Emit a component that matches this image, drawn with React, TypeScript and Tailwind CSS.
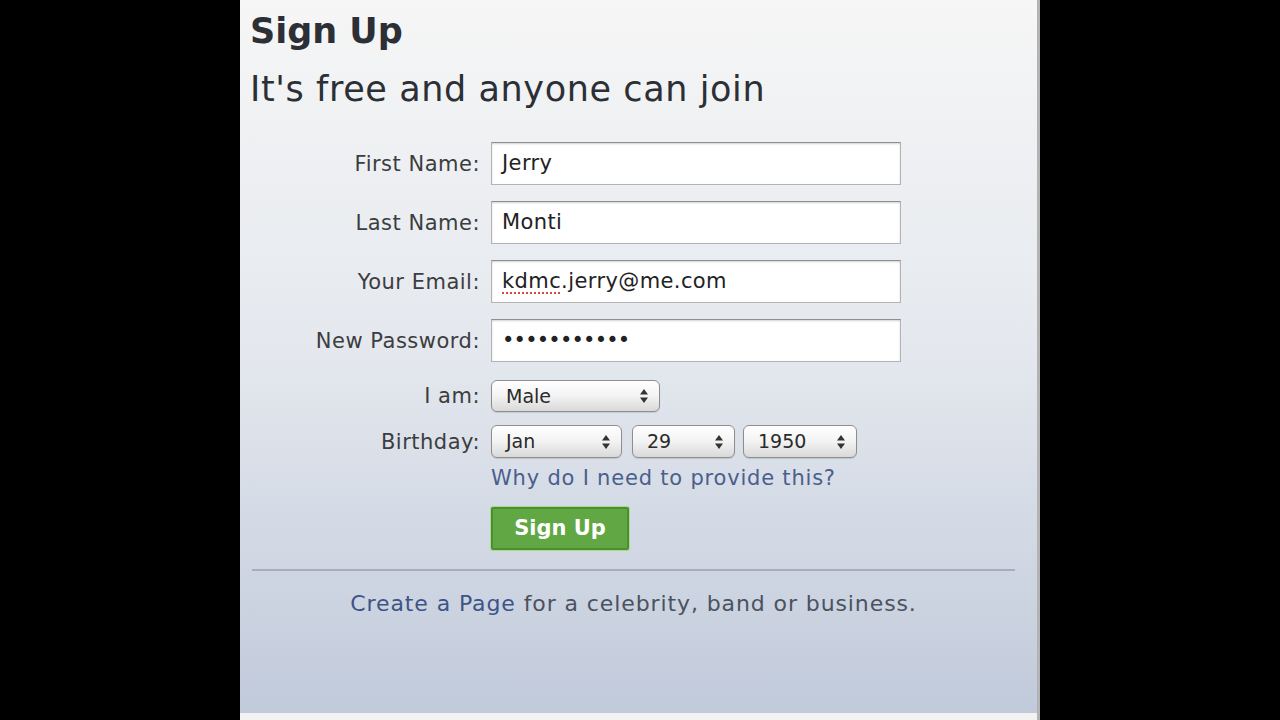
import type { ReactNode } from "react";

const Row = ({ label, children, className = "" }: { label: string; children: ReactNode; className?: string }) => (
  <div className={`flex items-center gap-[11px] ${className}`}>
    <div className="w-[180px] whitespace-nowrap text-right text-[21px] leading-[24px] tracking-[0.5px] text-[#3b3d40]">{label}</div>
    {children}
  </div>
);

const Field = ({ children }: { children: ReactNode }) => (
  <div className="flex h-[43px] w-[410px] items-center border border-[#b3b3b3] border-t-[#8f8f8f] bg-white pl-[10px] text-[21px] tracking-[0.4px] text-[#222] shadow-[inset_0_1px_2px_rgba(0,0,0,0.18)]">
    {children}
  </div>
);

const Arrows = () => (
  <svg width="8" height="14" viewBox="0 0 8 14" className="shrink-0">
    <polygon points="0,5.5 4,0 8,5.5" fill="#333" />
    <polygon points="0,8.5 4,14 8,8.5" fill="#333" />
  </svg>
);

const Select = ({ value, className }: { value: string; className: string }) => (
  <div
    className={`flex h-full items-center justify-between rounded-[6px] border border-[#8e8e8e] bg-linear-to-b from-white via-[#f3f3f3] to-[#d9d9d9] pl-[14px] pr-[11px] text-[19px] text-[#2a2a2a] shadow-[0_1px_1px_rgba(0,0,0,0.12)] ${className}`}
  >
    <span>{value}</span>
    <Arrows />
  </div>
);

export default function App() {
  return (
    <div className="flex h-screen w-full justify-center bg-black font-['DejaVu_Sans',sans-serif]">
      <div className="flex h-full w-[800px] flex-col border-r-[3px] border-[#b3b3b3]">
        <div className="flex flex-1 flex-col bg-linear-to-b from-[#f6f6f6] via-[#e4e8ee] to-[#c1cadb] pl-[10px]">
          <h1 className="pt-[10px] text-[35px] font-bold leading-[42px] text-[#2c2f35]">Sign Up</h1>
          <h2 className="mt-[16px] text-[35px] leading-[42px] tracking-[0.6px] text-[#2c2f35]">It's free and anyone can join</h2>

          {/* form */}
          <div className="ml-[50px] mt-[32px] flex flex-col">
            <Row label="First Name:">
              <Field>Jerry</Field>
            </Row>
            <Row label="Last Name:" className="mt-[16px]">
              <Field>Monti</Field>
            </Row>
            <Row label="Your Email:" className="mt-[16px]">
              <Field>
                <span className="underline decoration-[#d9473f] decoration-dotted decoration-2 underline-offset-[5px]">kdmc</span>
                .jerry@me.com
              </Field>
            </Row>
            <Row label="New Password:" className="mt-[16px]">
              <Field>
                <span className="tracking-[-0.8px]">•••••••••••</span>
              </Field>
            </Row>

            <Row label="I am:" className="mt-[18px] h-[32px]">
              <Select value="Male" className="w-[169px]" />
            </Row>
            <Row label="Birthday:" className="mt-[13px] h-[33px]">
              <div className="flex h-full">
                <Select value="Jan" className="w-[131px]" />
                <Select value="29" className="ml-[10px] w-[103px]" />
                <Select value="1950" className="ml-[8px] w-[114px]" />
              </div>
            </Row>

            <a className="ml-[191px] mt-[8px] text-[21px] leading-[24px] tracking-[0.8px] text-[#4a5f8c]">
              Why do I need to provide this?
            </a>

            <button className="ml-[191px] mt-[17px] flex h-[43px] w-[138px] items-center justify-center rounded-[2px] border-2 border-[#4c8f30] bg-[#61a744] text-[21px] font-bold text-white shadow-[0_0_0_1px_#a9d98f]">
              Sign Up
            </button>
          </div>

          <div className="ml-[2px] mt-[19px] h-[2px] w-[763px] bg-[#a6aebb]" />

          <p className="ml-[2px] mt-[20px] w-[763px] text-center text-[22px] leading-[26px] tracking-[0.9px] text-[#4b525f]">
            <span className="text-[#3d5487]">Create a Page</span> for a celebrity, band or business.
          </p>
        </div>
        <div className="h-[7px] bg-[#f3f3f3]" />
      </div>
    </div>
  );
}
